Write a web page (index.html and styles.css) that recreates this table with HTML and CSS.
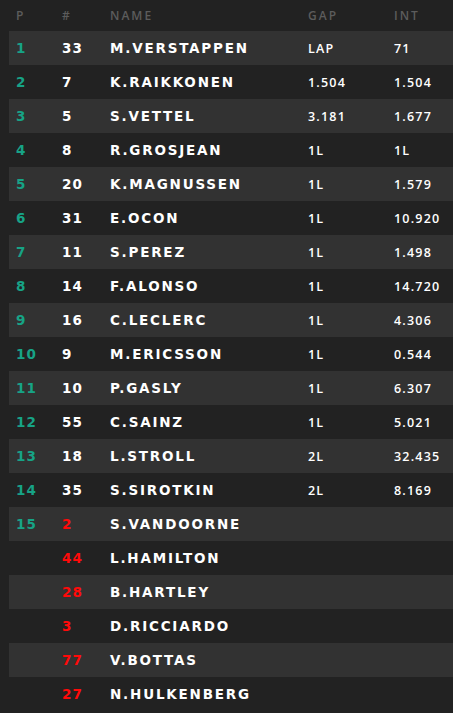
FILE: index.html
```html
<!DOCTYPE html>
<html>
<head>
<meta charset="utf-8">
<link rel="stylesheet" href="styles.css">
</head>
<body>
<div class="board">
  <div class="row head">
    <span class="c-pos">P</span><span class="c-num">#</span><span class="c-name">NAME</span><span class="c-gap">GAP</span><span class="c-int">INT</span>
  </div>
  <div class="row alt"><span class="c-pos">1</span><span class="c-num">33</span><span class="c-name">M.VERSTAPPEN</span><span class="c-gap">LAP</span><span class="c-int">71</span></div>
  <div class="row"><span class="c-pos">2</span><span class="c-num">7</span><span class="c-name">K.RAIKKONEN</span><span class="c-gap">1.504</span><span class="c-int">1.504</span></div>
  <div class="row alt"><span class="c-pos">3</span><span class="c-num">5</span><span class="c-name">S.VETTEL</span><span class="c-gap">3.181</span><span class="c-int">1.677</span></div>
  <div class="row"><span class="c-pos">4</span><span class="c-num">8</span><span class="c-name">R.GROSJEAN</span><span class="c-gap">1L</span><span class="c-int">1L</span></div>
  <div class="row alt"><span class="c-pos">5</span><span class="c-num">20</span><span class="c-name">K.MAGNUSSEN</span><span class="c-gap">1L</span><span class="c-int">1.579</span></div>
  <div class="row"><span class="c-pos">6</span><span class="c-num">31</span><span class="c-name">E.OCON</span><span class="c-gap">1L</span><span class="c-int">10.920</span></div>
  <div class="row alt"><span class="c-pos">7</span><span class="c-num">11</span><span class="c-name">S.PEREZ</span><span class="c-gap">1L</span><span class="c-int">1.498</span></div>
  <div class="row"><span class="c-pos">8</span><span class="c-num">14</span><span class="c-name">F.ALONSO</span><span class="c-gap">1L</span><span class="c-int">14.720</span></div>
  <div class="row alt"><span class="c-pos">9</span><span class="c-num">16</span><span class="c-name">C.LECLERC</span><span class="c-gap">1L</span><span class="c-int">4.306</span></div>
  <div class="row"><span class="c-pos">10</span><span class="c-num">9</span><span class="c-name">M.ERICSSON</span><span class="c-gap">1L</span><span class="c-int">0.544</span></div>
  <div class="row alt"><span class="c-pos">11</span><span class="c-num">10</span><span class="c-name">P.GASLY</span><span class="c-gap">1L</span><span class="c-int">6.307</span></div>
  <div class="row"><span class="c-pos">12</span><span class="c-num">55</span><span class="c-name">C.SAINZ</span><span class="c-gap">1L</span><span class="c-int">5.021</span></div>
  <div class="row alt"><span class="c-pos">13</span><span class="c-num">18</span><span class="c-name">L.STROLL</span><span class="c-gap">2L</span><span class="c-int">32.435</span></div>
  <div class="row"><span class="c-pos">14</span><span class="c-num">35</span><span class="c-name">S.SIROTKIN</span><span class="c-gap">2L</span><span class="c-int">8.169</span></div>
  <div class="row alt"><span class="c-pos">15</span><span class="c-num out">2</span><span class="c-name">S.VANDOORNE</span><span class="c-gap"></span><span class="c-int"></span></div>
  <div class="row"><span class="c-pos"></span><span class="c-num out">44</span><span class="c-name">L.HAMILTON</span><span class="c-gap"></span><span class="c-int"></span></div>
  <div class="row alt"><span class="c-pos"></span><span class="c-num out">28</span><span class="c-name">B.HARTLEY</span><span class="c-gap"></span><span class="c-int"></span></div>
  <div class="row"><span class="c-pos"></span><span class="c-num out">3</span><span class="c-name">D.RICCIARDO</span><span class="c-gap"></span><span class="c-int"></span></div>
  <div class="row alt"><span class="c-pos"></span><span class="c-num out">77</span><span class="c-name">V.BOTTAS</span><span class="c-gap"></span><span class="c-int"></span></div>
  <div class="row"><span class="c-pos"></span><span class="c-num out">27</span><span class="c-name">N.HULKENBERG</span><span class="c-gap"></span><span class="c-int"></span></div>
</div>
</body>
</html>
```
FILE: styles.css
```css
html, body {
  margin: 0;
  padding: 0;
  background: #222222;
}
body {
  font-family: "DejaVu Sans", sans-serif;
  color: #ffffff;
}
.board {
  padding-left: 9px;
}
.row {
  display: grid;
  grid-template-columns: 46px 48px 198px 86px 1fr;
  align-items: center;
  height: 34px;
  padding-left: 7px;
}
.row.head {
  height: 31px;
  font-family: "Open Sans", sans-serif;
  font-size: 12px;
  font-weight: 600;
  letter-spacing: 2px;
  color: #5c5c5c;
}
.row.alt {
  background: #323232;
}
.c-pos {
  color: #17a386;
  font-weight: bold;
  font-size: 13.5px;
  letter-spacing: 1.2px;
}
.c-num {
  font-weight: bold;
  font-size: 13.5px;
  letter-spacing: 1.2px;
}
.c-num.out { color: #ff0a0a; }
.c-name {
  font-weight: bold;
  font-size: 13.5px;
  letter-spacing: 1.8px;
}
.c-gap, .c-int {
  font-family: "Open Sans", sans-serif;
  font-weight: 600;
  font-size: 12.5px;
  letter-spacing: 1.2px;
}
.head .c-pos, .head .c-num, .head .c-name, .head .c-gap, .head .c-int {
  font-family: "Open Sans", sans-serif;
  color: #5c5c5c;
  font-size: 12px;
  font-weight: 600;
  letter-spacing: 2px;
}
```
